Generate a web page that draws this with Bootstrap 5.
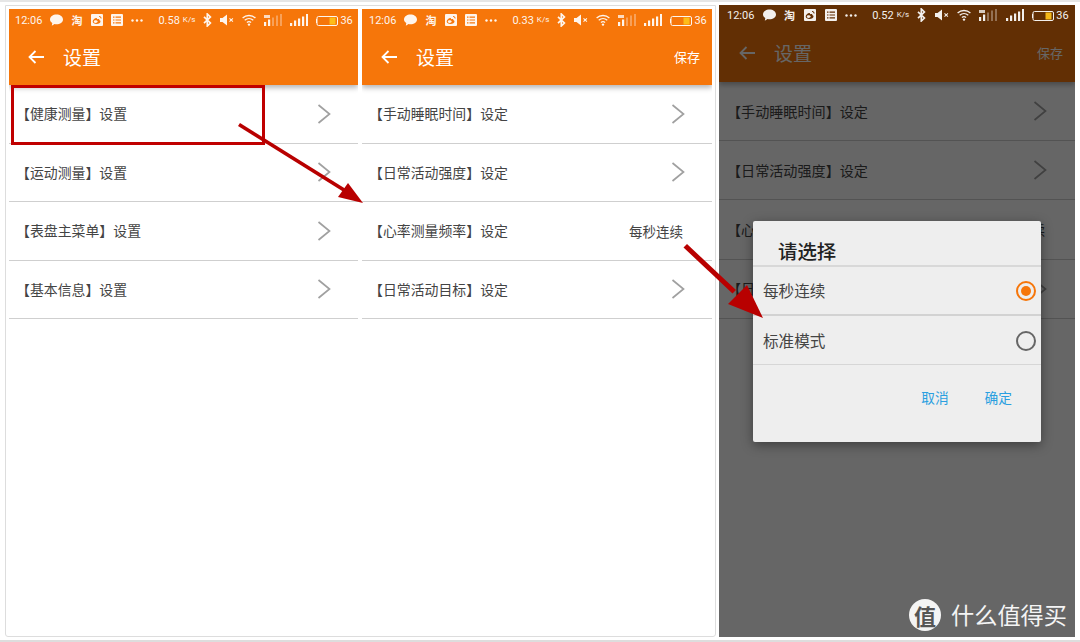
<!DOCTYPE html>
<html lang="zh-CN">
<head>
  <meta charset="UTF-8">
  <meta name="viewport" content="width=device-width, initial-scale=1.0">
  <title>设置</title>
  <link href="https://cdn.jsdelivr.net/npm/bootstrap@5.3.3/dist/css/bootstrap.min.css" rel="stylesheet">
  <script src="https://cdn.jsdelivr.net/npm/bootstrap@5.3.3/dist/js/bootstrap.bundle.min.js"></script>
  <style>
    body { margin: 0; background: #fff; font-family: "Noto Sans CJK SC", "Liberation Sans", sans-serif; }
    .stage { position: relative; width: 1080px; height: 642px; padding: 3px 5px 0; border-top: 2px solid #e6e6e6; border-bottom: 2px solid #ddd; overflow: hidden; }
    .frame { width: 711px; height: 632px; padding: 3px; margin-right: 3px; border: 1px solid #ddd; border-radius: 0 0 3px 3px; }
    .phone { position: relative; height: 100%; background: #fff; overflow: hidden; }
    .w1 { width: 349px; }
    .w2 { width: 350px; }
    .w3 { width: 356px; height: 632px; }
    .appbar { background: #f6760a; box-shadow: 0 3px 5px rgba(0,0,0,.28); color: #fff; }
    .statusbar { position: relative; z-index: 3; height: 22px; padding-left: 6px; gap: 8px; font: 11px/1 Roboto, "Liberation Sans", sans-serif; color: #fff; white-space: nowrap; opacity: .93; }
    .w2 .statusbar { padding-left: 7px; }
    .w3 .statusbar { height: 20px; padding-left: 8px; gap: 8.3px; }
    .statusbar svg { display: block; flex: none; fill: currentColor; }
    .tao { width: 12px; font: 700 11px/1 "Noto Sans CJK SC", sans-serif; }
    .speed { width: 37px; margin-left: 7px; }
    .speed sup { font-size: 8px; top: -.25em; margin-left: 3px; }
    .batnum { margin-left: -6px; }
    .toolbar { height: 54px; padding: 0 12px 3px 19px; gap: 19px; }
    .w3 .toolbar { height: 57px; padding-left: 20px; padding-bottom: 2px; }
    .toolbar svg { display: block; flex: none; }
    .toolbar-title { font-size: 19px; line-height: 1; }
    .toolbar-save { margin-left: auto; font-size: 13px; line-height: 1; }
    .set-list { background: transparent; }
    .set-item { height: 58.5px; padding: 0 27px 0 7px; background: transparent; border-width: 0 0 1px; border-style: solid; border-color: #cfcfcf; border-radius: 0; font-size: 13.9px; color: #444; }
    .w3 .set-item { height: 59.2px; padding-left: 8px; padding-right: 28px; font-size: 14.1px; }
    .set-item svg { flex: none; }
    .set-value { font-size: 13.5px; padding-right: 2px; }
    .dim { position: absolute; inset: 0; z-index: 2; background: rgba(0,0,0,.6); }
    .pick { position: absolute; z-index: 4; left: 34px; top: 216px; width: 288px; height: 221px; background: #eee; border: 0; border-radius: 2px; box-shadow: 0 3px 12px rgba(0,0,0,.4); }
    .pick-title { height: 46px; padding: 17px 0 0 25px; font-size: 19.4px; font-weight: 500; line-height: 1.3; color: #222; border-bottom: 2px solid #d8d8d8; }
    .pick-item { padding: 0 5px 0 10px; font-size: 15.6px; color: #444; background: transparent; border: 0; border-radius: 0; }
    .pick-one { height: 49px; border-bottom: 2px solid #d2d2d2; }
    .pick-two { height: 49px; padding-top: 1px; border-bottom: 1px solid #d6d6d6; }
    .dot { width: 20px; height: 20px; border: 2px solid #666; border-radius: 50%; }
    .dot-on { border-color: #f6760a; }
    .dot-on::after { content: ""; width: 10px; height: 10px; border-radius: 50%; background: #f6760a; }
    .pick-actions { padding: 24px 29px 0 0; gap: 36px; font-size: 13.7px; line-height: 1.2; color: #2a9fe0; }
    .brand { position: absolute; z-index: 4; right: 8px; bottom: 6px; gap: 10px; color: #f4f4f4; }
    .brand-mark { width: 32px; height: 32px; border-radius: 50%; background: #f4f4f4; color: #555; font-size: 22px; font-weight: 700; line-height: 1; }
    .brand-name { font-size: 23.2px; line-height: 1; white-space: nowrap; }
    .redbox { position: absolute; z-index: 5; left: 11px; top: 83px; width: 254px; height: 60px; border: 3px solid #c00000; }
    .arrows { position: absolute; z-index: 5; left: 0; top: -2px; }
  </style>
</head>
<body>
<svg width="0" height="0" class="position-absolute">
  <symbol id="i-bubble" viewBox="0 0 13 12"><path d="M6.500.5C10 .5 13 2.600 13 5.400S10 10.300 6.500 10.300c-.7 0-1.300-.1-1.900-.2L1.800 11.700l.5-2.700C.8 8 0 6.800 0 5.400 0 2.600 3 .5 6.500.5z"/></symbol>
  <symbol id="i-weibo" viewBox="0 0 12 12"><path fill-rule="evenodd" d="M1 0h10a1 1 0 0 1 1 1v10a1 1 0 0 1-1 1H1a1 1 0 0 1-1-1V1a1 1 0 0 1 1-1zM5 4C3.200 4.500 1.700 6 1.700 7.500c0 1.400 1.700 2.500 3.800 2.500 2.300 0 4-1.300 4-2.500 0-.9-.8-1.200-1.300-1.400.3-.8 0-1.400-1.400-1.100-.5.100-.8.300-.9.200.2-1-.1-1.500-.9-1.200zM4.500 6.300c1.200 0 2.200.6 2.200 1.300S5.700 9 4.500 9 2.800 8.300 2.800 7.600s.5-1.300 1.700-1.300zM8 2v.9c1 0 1.700.7 1.700 1.700h.9C10.600 3.100 9.500 2 8 2z"/></symbol>
  <symbol id="i-list" viewBox="0 0 12 12"><path fill-rule="evenodd" d="M1 0h10a1 1 0 0 1 1 1v10a1 1 0 0 1-1 1H1a1 1 0 0 1-1-1V1a1 1 0 0 1 1-1zM2 2.500v1.200h1.500V2.500zM4.500 2.500v1.200h5.500V2.500zM2 5.400v1.200h1.500V5.400zM4.500 5.400v1.200h5.500V5.400zM2 8.300v1.200h1.500V8.300zM4.500 8.300v1.200h5.500V8.300z"/></symbol>
  <symbol id="i-dots" viewBox="0 0 12 3"><circle cx="1.500" cy="1.500" r="1.200"/><circle cx="6" cy="1.500" r="1.200"/><circle cx="10.500" cy="1.500" r="1.200"/></symbol>
  <symbol id="i-bt" viewBox="0 0 9 14"><path fill="none" stroke="currentColor" stroke-width="1.700" d="M1 3.800l6.400 6.200L4.300 13V1l3.100 3L1 10.200"/></symbol>
  <symbol id="i-mute" viewBox="0 0 14 12"><path d="M0 4h2.500L7 .5v11L2.500 8H0z"/><path fill="none" stroke="currentColor" stroke-width="1.100" d="M9.500 4.300l3.400 3.400M12.900 4.300L9.500 7.700"/></symbol>
  <symbol id="i-wifi" viewBox="0 0 14 12"><g fill="none" stroke="currentColor" stroke-width="1.300"><path d="M.6 3.900C4.200.7 9.800.7 13.400 3.900"/><path d="M2.700 6.200c2.500-2.100 6.100-2.100 8.600 0"/><path d="M4.900 8.400c1.300-1 2.900-1 4.200 0"/></g><circle cx="7" cy="10.600" r="1.200"/></symbol>
  <symbol id="i-sig4g" viewBox="0 0 18 12"><rect x="0" y="8" width="2.200" height="4"/><rect x="4" y="5.500" width="2.200" height="6.500"/><rect x="8" y="3.500" width="2" height="8.500" opacity=".35"/><rect x="12" y="1.500" width="2" height="10.500" opacity=".35"/><rect x="16" y="0" width="2" height="12" opacity=".35"/><rect x="0" y="1" width="6" height="3" opacity=".8"/></symbol>
  <symbol id="i-sig" viewBox="0 0 18 12"><rect x="0" y="9" width="2.200" height="3"/><rect x="4" y="6.500" width="2.200" height="5.500"/><rect x="8" y="4.500" width="2.200" height="7.500"/><rect x="12" y="2.500" width="2.200" height="9.500"/><rect x="16" y="0" width="2" height="12"/></symbol>
  <symbol id="i-bat" viewBox="0 0 22 11"><rect x="1" y="1.500" width="20.500" height="9" rx="1.500" fill="none" stroke="currentColor" stroke-width="1"/><rect x="0" y="4" width="1" height="4"/><rect x="13.500" y="2.500" width="6" height="7" fill="#ffc21a"/></symbol>
  <symbol id="i-back" viewBox="0 0 16 14"><path fill="none" stroke="currentColor" stroke-width="1.800" d="M16 7H1.500M7.500 1L1.500 7l6 6"/></symbol>
  <symbol id="i-chev" viewBox="0 0 14 20"><path fill="none" stroke="#a0a0a0" stroke-width="1.700" d="M1.500 1l11 9-11 9"/></symbol>
</svg>

<div class="stage d-flex">
  <div class="frame d-flex gap-1">

    <div class="phone w1">
      <div class="appbar">
        <div class="statusbar d-flex align-items-center">
          <span>12:06</span>
          <svg width="13" height="12"><use href="#i-bubble"/></svg>
          <span class="tao">淘</span>
          <svg width="12" height="12"><use href="#i-weibo"/></svg>
          <svg width="12" height="12"><use href="#i-list"/></svg>
          <svg width="12" height="3"><use href="#i-dots"/></svg>
          <span class="speed">0.58<sup>K/s</sup></span>
          <svg width="9" height="14"><use href="#i-bt"/></svg>
          <svg width="14" height="12"><use href="#i-mute"/></svg>
          <svg width="14" height="12"><use href="#i-wifi"/></svg>
          <svg width="18" height="12"><use href="#i-sig4g"/></svg>
          <svg width="18" height="12"><use href="#i-sig"/></svg>
          <svg width="22" height="11"><use href="#i-bat"/></svg>
          <span class="batnum">36</span>
        </div>
        <div class="toolbar d-flex align-items-center">
          <svg width="16" height="14"><use href="#i-back"/></svg>
          <span class="toolbar-title">设置</span>
        </div>
      </div>
      <div class="list-group set-list">
        <div class="set-item d-flex align-items-center justify-content-between"><span>【健康测量】设置</span><svg width="14" height="20"><use href="#i-chev"/></svg></div>
        <div class="set-item d-flex align-items-center justify-content-between"><span>【运动测量】设置</span><svg width="14" height="20"><use href="#i-chev"/></svg></div>
        <div class="set-item d-flex align-items-center justify-content-between"><span>【表盘主菜单】设置</span><svg width="14" height="20"><use href="#i-chev"/></svg></div>
        <div class="set-item d-flex align-items-center justify-content-between"><span>【基本信息】设置</span><svg width="14" height="20"><use href="#i-chev"/></svg></div>
      </div>
    </div>

    <div class="phone w2">
      <div class="appbar">
        <div class="statusbar d-flex align-items-center">
          <span>12:06</span>
          <svg width="13" height="12"><use href="#i-bubble"/></svg>
          <span class="tao">淘</span>
          <svg width="12" height="12"><use href="#i-weibo"/></svg>
          <svg width="12" height="12"><use href="#i-list"/></svg>
          <svg width="12" height="3"><use href="#i-dots"/></svg>
          <span class="speed">0.33<sup>K/s</sup></span>
          <svg width="9" height="14"><use href="#i-bt"/></svg>
          <svg width="14" height="12"><use href="#i-mute"/></svg>
          <svg width="14" height="12"><use href="#i-wifi"/></svg>
          <svg width="18" height="12"><use href="#i-sig4g"/></svg>
          <svg width="18" height="12"><use href="#i-sig"/></svg>
          <svg width="22" height="11"><use href="#i-bat"/></svg>
          <span class="batnum">36</span>
        </div>
        <div class="toolbar d-flex align-items-center">
          <svg width="16" height="14"><use href="#i-back"/></svg>
          <span class="toolbar-title">设置</span>
          <span class="toolbar-save">保存</span>
        </div>
      </div>
      <div class="list-group set-list">
        <div class="set-item d-flex align-items-center justify-content-between"><span>【手动睡眠时间】设定</span><svg width="14" height="20"><use href="#i-chev"/></svg></div>
        <div class="set-item d-flex align-items-center justify-content-between"><span>【日常活动强度】设定</span><svg width="14" height="20"><use href="#i-chev"/></svg></div>
        <div class="set-item d-flex align-items-center justify-content-between"><span>【心率测量频率】设定</span><span class="set-value">每秒连续</span></div>
        <div class="set-item d-flex align-items-center justify-content-between"><span>【日常活动目标】设定</span><svg width="14" height="20"><use href="#i-chev"/></svg></div>
      </div>
    </div>
  </div>

  <div class="phone w3">
    <div class="appbar">
      <div class="statusbar d-flex align-items-center">
        <span>12:06</span>
        <svg width="13" height="12"><use href="#i-bubble"/></svg>
        <span class="tao">淘</span>
        <svg width="12" height="12"><use href="#i-weibo"/></svg>
        <svg width="12" height="12"><use href="#i-list"/></svg>
        <svg width="12" height="3"><use href="#i-dots"/></svg>
        <span class="speed">0.52<sup>K/s</sup></span>
        <svg width="9" height="14"><use href="#i-bt"/></svg>
        <svg width="14" height="12"><use href="#i-mute"/></svg>
        <svg width="14" height="12"><use href="#i-wifi"/></svg>
        <svg width="18" height="12"><use href="#i-sig4g"/></svg>
        <svg width="18" height="12"><use href="#i-sig"/></svg>
        <svg width="22" height="11"><use href="#i-bat"/></svg>
        <span class="batnum">36</span>
      </div>
      <div class="toolbar d-flex align-items-center">
        <svg width="16" height="14"><use href="#i-back"/></svg>
        <span class="toolbar-title">设置</span>
        <span class="toolbar-save">保存</span>
      </div>
    </div>
    <div class="list-group set-list">
      <div class="set-item d-flex align-items-center justify-content-between"><span>【手动睡眠时间】设定</span><svg width="14" height="20"><use href="#i-chev"/></svg></div>
      <div class="set-item d-flex align-items-center justify-content-between"><span>【日常活动强度】设定</span><svg width="14" height="20"><use href="#i-chev"/></svg></div>
      <div class="set-item d-flex align-items-center justify-content-between"><span>【心率测量频率】设定</span><span class="set-value">每秒连续</span></div>
      <div class="set-item d-flex align-items-center justify-content-between"><span>【日常活动目标】设定</span><svg width="14" height="20"><use href="#i-chev"/></svg></div>
    </div>
    <div class="dim"></div>

    <div class="card pick">
      <div class="pick-title">请选择</div>
      <div class="list-group">
        <div class="pick-item pick-one d-flex align-items-center justify-content-between"><span>每秒连续</span><span class="dot dot-on d-flex align-items-center justify-content-center"></span></div>
        <div class="pick-item pick-two d-flex align-items-center justify-content-between"><span>标准模式</span><span class="dot"></span></div>
      </div>
      <div class="pick-actions d-flex justify-content-end"><span>取消</span><span>确定</span></div>
    </div>

    <div class="brand d-flex align-items-center">
      <span class="brand-mark d-flex align-items-center justify-content-center">值</span>
      <span class="brand-name">什么值得买</span>
    </div>
  </div>

  <div class="redbox"></div>
  <svg class="arrows" width="1080" height="642" fill="#b80000">
    <path d="M238 126l2-3 105 65.500-2 3z"/>
    <path d="M363 203l-25-6 10-14z"/>
    <path d="M683.500 247.500l3.500-3.500 49 46-3.500 3.500z"/>
    <path d="M763 318l-35-14 19-19z"/>
  </svg>
</div>
</body>
</html>
